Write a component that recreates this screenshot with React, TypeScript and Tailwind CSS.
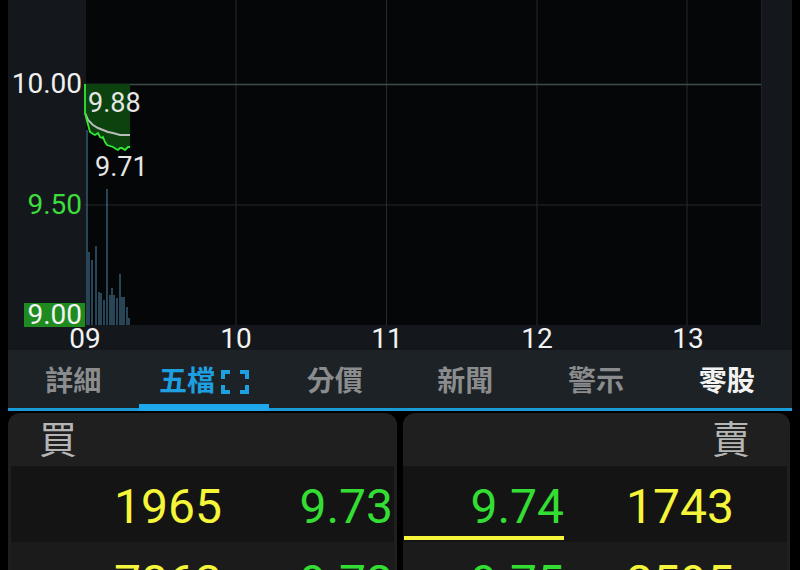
import React from "react";

const volumes: [number, number][] = [
  [87, 130], [89, 252], [92, 260], [96, 246], [99, 292], [101, 293], [104, 300],
  [107, 189], [110, 295], [112, 288], [114, 295], [117, 298], [120, 274],
  [122, 297], [124, 297], [127, 307], [129, 318],
];

const pricePts: [number, number][] = [
  [85, 84], [85, 113], [87, 121], [90, 132], [93, 134], [95, 135], [98, 133],
  [100, 137], [102, 138], [103, 137], [105, 142], [107, 145], [110, 146],
  [113, 147], [116, 149], [118, 150], [120, 148], [122, 148], [125, 150],
  [128, 147], [130, 147],
];

const avgPts: [number, number][] = [
  [85, 113], [88, 120], [93, 125], [98, 128], [103, 130], [108, 132],
  [113, 133], [120, 135], [130, 135],
];

const toSvg = (pts: [number, number][]) =>
  pts.map(([x, y]) => `${x - 84},${y}`).join(" ");

const tabs = ["詳細", "五檔", "分價", "新聞", "警示", "零股"];

function Chart() {
  const vLines = [1, 152, 302.5, 453, 603];
  const fill = `1,84 ${toSvg(pricePts)} 46,84`;
  return (
    <svg width="678" height="325" viewBox="0 0 678 325" className="block">
      <rect x="0" y="0" width="678" height="325" fill="#050607" />
      {vLines.map((x) => (
        <line key={x} x1={x} y1="0" x2={x} y2="325" stroke="#262b2f" strokeWidth="1" />
      ))}
      <line x1="0" y1="205" x2="678" y2="205" stroke="#25292c" strokeWidth="1" />
      <line x1="0" y1="84.5" x2="678" y2="84.5" stroke="#3d4d4e" strokeWidth="1.3" />
      <line x1="677.5" y1="0" x2="677.5" y2="325" stroke="#1d2226" strokeWidth="1" />
      {volumes.map(([x, top]) => (
        <line key={x} x1={x - 84} y1={top} x2={x - 84} y2="325" stroke="#41718f" strokeWidth="1.2" />
      ))}
      <polygon points={fill} fill="#0c420d" />
      <polyline points={toSvg(avgPts)} fill="none" stroke="#b9bdb9" strokeWidth="2" />
      <polyline points={toSvg(pricePts)} fill="none" stroke="#33e633" strokeWidth="1.8" />
      <text x="4" y="112" fill="#e6e6e6" fontSize="27" fontFamily="Roboto, sans-serif">9.88</text>
      <text x="11" y="176" fill="#e6e6e6" fontSize="27" fontFamily="Roboto, sans-serif">9.71</text>
    </svg>
  );
}

function BracketIcon() {
  return (
    <svg width="28" height="24" viewBox="0 0 28 24" className="ml-[6px]">
      <path d="M2 9V2h7M19 2h7v7M26 15v7h-7M9 22H2v-7" fill="none" stroke="#1e9fe0" strokeWidth="4" />
    </svg>
  );
}

export default function App() {
  const axisTicks = [
    { label: "09", x: 85 },
    { label: "10", x: 236 },
    { label: "11", x: 387 },
    { label: "12", x: 537 },
    { label: "13", x: 688 },
  ];
  return (
    <div className="w-[800px] h-[570px] overflow-hidden bg-black px-2 font-[Roboto,'Noto_Sans_CJK_TC',sans-serif]">
      {/* chart */}
      <div className="h-[350px] bg-[#14181c] flex flex-col">
        <div className="flex h-[325px]">
          <div className="relative w-[76px] shrink-0">
            <span className="absolute right-[2px] top-[68px] text-[28px] leading-[32px] text-[#f0f0f0]">10.00</span>
            <span className="absolute right-[2px] top-[189px] text-[28px] leading-[32px] text-[#3ddc3d]">9.50</span>
            <span className="absolute right-[-1px] top-[303px] h-[24px] bg-[#1f8a1f] px-[3px] text-[28px] leading-[24px] text-[#f2f2f2]">9.00</span>
          </div>
          <Chart />
        </div>
        <div className="relative h-[25px]">
          {axisTicks.map((t) => (
            <span
              key={t.label}
              className="absolute top-[-1px] w-[40px] -ml-[20px] text-center text-[28px] leading-[30px] text-[#f2f2f2]"
              style={{ left: t.x - 8 }}
            >
              {t.label}
            </span>
          ))}
        </div>
      </div>

      {/* tabs */}
      <div className="relative h-[61px] bg-[#1d2226]">
        <div className="grid h-[58px] grid-cols-6 pt-[5px]">
          {tabs.map((t, i) => (
            <div key={t} className="relative flex items-center justify-center">
              <span
                className={
                  i === 1
                    ? "text-[28px] font-bold text-[#1e9fe0]"
                    : i === 5
                      ? "text-[28px] font-bold text-[#f2f2f2]"
                      : "text-[28px] font-bold text-[#8a8c8e]"
                }
              >
                {t}
              </span>
              {i === 1 && <BracketIcon />}
              {i === 1 && <div className="absolute bottom-[-3px] left-0 right-0 h-[7px] bg-[#1ea7ea]" />}
            </div>
          ))}
        </div>
        <div className="h-[3px] bg-[#1a9bd8]" />
      </div>

      {/* order book */}
      <div className="mt-[2px] flex gap-[6px]">
        <div className="w-[389px] rounded-t-[12px] bg-[#1f1f1f] px-[3px]">
          <div className="flex h-[53px] items-center pl-[28px] text-[38px] leading-none text-[#b5b5b5]">買</div>
          <div className="flex h-[76px] bg-[#141414] text-[48px] leading-none">
            <div className="w-[211px] text-right text-[#f5f53a] pt-[17px]">1965</div>
            <div className="flex-1 text-right pr-[1px] text-[#33dd33] pt-[17px]">9.73</div>
          </div>
          <div className="flex h-[76px] bg-[#1b1b1b] text-[48px] leading-none">
            <div className="w-[211px] text-right text-[#f5f53a] pt-[17px]">7863</div>
            <div className="flex-1 text-right pr-[1px] text-[#33dd33] pt-[17px]">9.72</div>
          </div>
        </div>
        <div className="w-[387px] rounded-t-[12px] bg-[#1f1f1f] pr-[3px]">
          <div className="flex h-[53px] items-center justify-end pr-[37px] text-[38px] leading-none text-[#b5b5b5]">賣</div>
          <div className="flex h-[76px] bg-[#141414] text-[48px] leading-none">
            <div className="relative w-[161px] text-right text-[#33dd33] pt-[17px]">
              9.74
              <div className="absolute bottom-[2px] left-[1px] right-0 h-[4px] bg-[#f5f53a]" />
            </div>
            <div className="w-[170px] text-right text-[#f5f53a] pt-[17px]">1743</div>
          </div>
          <div className="flex h-[76px] bg-[#1b1b1b] text-[48px] leading-none">
            <div className="w-[161px] text-right text-[#33dd33] pt-[17px]">9.75</div>
            <div className="w-[170px] text-right text-[#f5f53a] pt-[17px]">2595</div>
          </div>
        </div>
      </div>
    </div>
  );
}
